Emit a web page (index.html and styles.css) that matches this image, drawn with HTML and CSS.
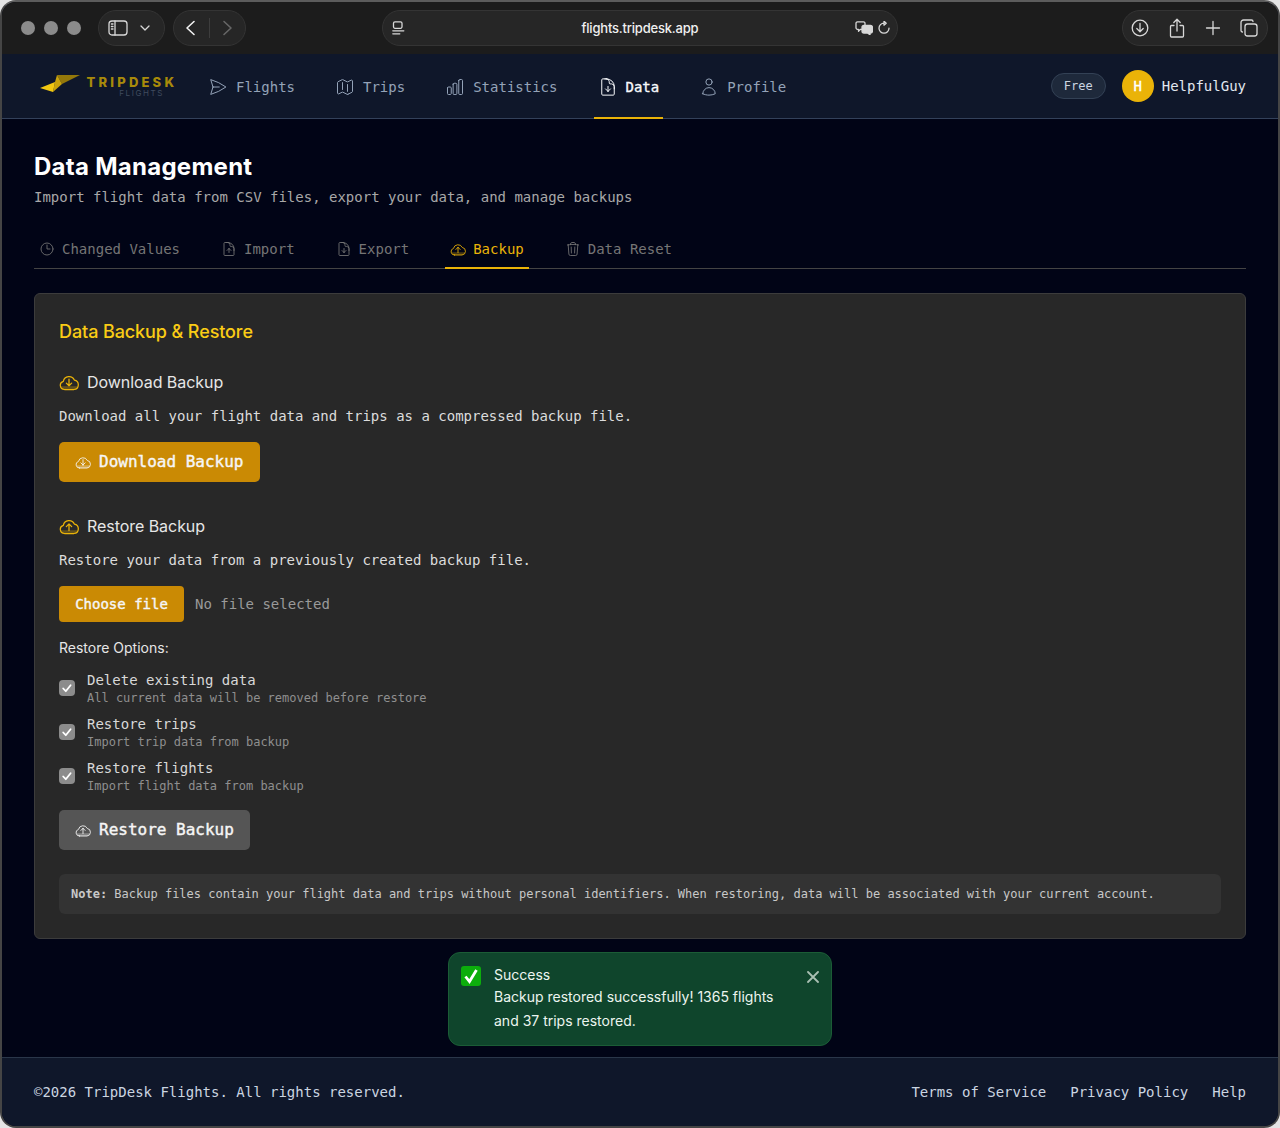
FILE: index.html
```html
<!DOCTYPE html>
<html lang="en">
<head>
<meta charset="utf-8">
<title>TripDesk Flights</title>
<link rel="stylesheet" href="styles.css">
</head>
<body>
<svg class="defs" width="0" height="0" aria-hidden="true">
  <symbol id="i-plane" viewBox="0 0 24 24"><path d="M6 12 3.269 3.125A59.769 59.769 0 0 1 21.485 12 59.768 59.768 0 0 1 3.27 20.875L5.999 12Zm0 0h7.5"/></symbol>
  <symbol id="i-map" viewBox="0 0 24 24"><path d="M9 6.75V15m6-6v8.25m.503 3.498 4.875-2.437c.381-.19.622-.58.622-1.006V4.82c0-.836-.88-1.38-1.628-1.006l-3.869 1.934c-.317.159-.69.159-1.006 0L9.503 3.252a1.125 1.125 0 0 0-1.006 0L3.622 5.689C3.24 5.88 3 6.27 3 6.695V19.18c0 .836.88 1.38 1.628 1.006l3.869-1.934c.317-.159.69-.159 1.006 0l4.994 2.497c.317.158.69.158 1.006 0Z"/></symbol>
  <symbol id="i-chart" viewBox="0 0 24 24"><path d="M3 13.125C3 12.504 3.504 12 4.125 12h2.25c.621 0 1.125.504 1.125 1.125v6.75C7.5 20.496 6.996 21 6.375 21h-2.25A1.125 1.125 0 0 1 3 19.875v-6.75ZM9.750 8.625c0-.621.504-1.125 1.125-1.125h2.25c.621 0 1.125.504 1.125 1.125v11.25c0 .621-.504 1.125-1.125 1.125h-2.25a1.125 1.125 0 0 1-1.125-1.125V8.625ZM16.500 4.125c0-.621.504-1.125 1.125-1.125h2.25C20.496 3 21 3.504 21 4.125v15.75c0 .621-.504 1.125-1.125 1.125h-2.25a1.125 1.125 0 0 1-1.125-1.125V4.125Z"/></symbol>
  <symbol id="i-docdown" viewBox="0 0 24 24"><path d="M19.500 14.250v-2.625a3.375 3.375 0 0 0-3.375-3.375h-1.500A1.125 1.125 0 0 1 13.500 7.125v-1.500a3.375 3.375 0 0 0-3.375-3.375H8.250m.750 12 3 3m0 0 3-3m-3-3v6m-1.500-15H5.625c-.621 0-1.125.504-1.125 1.125v17.250c0 .621.504 1.125 1.125 1.125h12.750c.621 0 1.125-.504 1.125-1.125V11.250a9 9 0 0 0-9-9Z"/></symbol>
  <symbol id="i-docup" viewBox="0 0 24 24"><path d="M19.500 14.250v-2.625a3.375 3.375 0 0 0-3.375-3.375h-1.500A1.125 1.125 0 0 1 13.500 7.125v-1.500a3.375 3.375 0 0 0-3.375-3.375H8.250m6.750 12-3-3m0 0-3 3m3-3v6m-1.500-15H5.625c-.621 0-1.125.504-1.125 1.125v17.250c0 .621.504 1.125 1.125 1.125h12.750c.621 0 1.125-.504 1.125-1.125V11.250a9 9 0 0 0-9-9Z"/></symbol>
  <symbol id="i-user" viewBox="0 0 24 24"><path d="M15.750 6a3.750 3.750 0 1 1-7.500 0 3.750 3.750 0 0 1 7.500 0ZM4.501 20.118a7.500 7.500 0 0 1 14.998 0A17.933 17.933 0 0 1 12 21.750c-2.676 0-5.216-.584-7.499-1.632Z"/></symbol>
  <symbol id="i-clock" viewBox="0 0 24 24"><path d="M12 6v6h4.500m4.500 0a9 9 0 1 1-18 0 9 9 0 0 1 18 0Z"/></symbol>
  <symbol id="i-trash" viewBox="0 0 24 24"><path d="m14.740 9-.346 9m-4.788 0L9.260 9m9.968-3.210c.342.052.682.107 1.022.166m-1.022-.165L18.160 19.673a2.250 2.250 0 0 1-2.244 2.077H8.084a2.250 2.250 0 0 1-2.244-2.077L4.772 5.790m14.456 0a48.108 48.108 0 0 0-3.478-.397m-12 .562c.340-.059.680-.114 1.022-.165m0 0a48.110 48.110 0 0 1 3.478-.397m7.500 0v-.916c0-1.180-.910-2.164-2.090-2.201a51.964 51.964 0 0 0-3.320 0c-1.180.037-2.090 1.022-2.090 2.201v.916m7.500 0a48.667 48.667 0 0 0-7.500 0"/></symbol>
  <symbol id="i-cloud-up" viewBox="0 0 24 20"><path class="duo" d="M2.500 15a4.300 4.300 0 0 0 4 4H18a4.200 4.200 0 0 0 3.800-4Z"/><path d="M12 15.500V7.500m0 0 3.200 3.200M12 7.500l-3.200 3.200M6.500 19A5 5 0 0 1 5.200 9.200a7 7 0 0 1 13.200-1.500A5.700 5.700 0 0 1 18 19H6.500Z"/></symbol>
  <symbol id="i-cloud-down" viewBox="0 0 24 20"><path class="duo" d="M2.500 15a4.300 4.300 0 0 0 4 4H18a4.200 4.200 0 0 0 3.800-4Z"/><path d="M12 6.500v8m0 0-3.200-3.200m3.200 3.200 3.200-3.200M6.500 19A5 5 0 0 1 5.200 9.200a7 7 0 0 1 13.200-1.500A5.700 5.700 0 0 1 18 19H6.500Z"/></symbol>
</svg>

<div class="window">
  <div class="chrome">
    <div class="lights"><span class="light"></span><span class="light"></span><span class="light"></span></div>
    <div class="pill pill-side">
      <svg class="cicon c20" viewBox="0 0 20 20"><rect x="1" y="3" width="18" height="14" rx="3"/><path d="M7 3v14M3.400 6h1.600M3.400 8.500h1.600M3.400 11h1.600"/></svg>
      <svg class="cicon c12" viewBox="0 0 12 12"><path d="m2 4 4 4 4-4"/></svg>
    </div>
    <div class="pill pill-nav">
      <svg class="cicon c16 strong" viewBox="0 0 16 16"><path d="M11 1.500 4 8l7 6.500"/></svg>
      <span class="pill-sep"></span>
      <svg class="cicon c16 dim" viewBox="0 0 16 16"><path d="m5 1.500 7 6.500-7 6.500"/></svg>
    </div>
    <div class="url">
      <svg class="cicon c14" viewBox="0 0 14 14"><rect x="1.500" y=".8" width="8.500" height="6.500" rx="1.500"/><path d="M.8 9.800h11M.8 12.800h7"/></svg>
      <span class="url-text">flights.tripdesk.app</span>
      <span class="url-tools">
        <svg class="cicon c-trans" viewBox="0 0 18 14"><path d="M2.500.8h6A1.500 1.500 0 0 1 10 2.300v4.500a1.500 1.500 0 0 1-1.500 1.500H5.500l-2 2V8.300h-1A1.500 1.500 0 0 1 1 6.800V2.300A1.500 1.500 0 0 1 2.500.8Z"/><path class="solid" d="M9 4.500h6.500a2 2 0 0 1 2 2v3.500a2 2 0 0 1-2 2h-.5v1.800L12.500 12H9a2 2 0 0 1-2-2V6.500a2 2 0 0 1 2-2Z"/></svg>
        <svg class="cicon c14" viewBox="0 0 14 14"><path d="M7 2.200a5 5 0 1 0 5 5M7 .2v4l2.200-2Z"/></svg>
      </span>
    </div>
    <div class="pill pill-tools">
      <svg class="cicon c18" viewBox="0 0 18 18"><circle cx="9" cy="9" r="7.800"/><path d="M9 4.500v8M5.800 9.500 9 12.700l3.200-3.200"/></svg>
      <svg class="cicon c-share" viewBox="0 0 18 20"><path d="M6 7.500H3.500a1 1 0 0 0-1 1V18a1 1 0 0 0 1 1h11a1 1 0 0 0 1-1V8.500a1 1 0 0 0-1-1H12M9 13V1.500M5.800 4.500 9 1.300l3.200 3.200"/></svg>
      <svg class="cicon c16" viewBox="0 0 16 16"><path d="M8 1.500v13M1.500 8h13"/></svg>
      <svg class="cicon c18" viewBox="0 0 18 18"><rect x="5" y="5" width="12" height="12" rx="2.500"/><path d="M2.500 13A1.500 1.500 0 0 1 1 11.500V3.500A2.500 2.500 0 0 1 3.500 1h8A1.500 1.500 0 0 1 13 2.500"/></svg>
    </div>
  </div>

  <header class="site-header">
    <a class="logo">
      <svg class="logo-mark" viewBox="0 0 40 18">
        <polygon class="wing-a" points="17,1 40,1 22,10"/>
        <polygon class="wing-b" points="17,1 22,10 13,18 15,8"/>
        <polygon class="wing-c" points="0,14 15,8 13,18"/>
      </svg>
      <span class="logo-text"><span class="logo-name">TRIPDESK</span><span class="logo-sub">FLIGHTS</span></span>
    </a>
    <nav class="main-nav">
      <a class="nav-item"><svg class="icon nav-icon"><use href="#i-plane"/></svg>Flights</a>
      <a class="nav-item"><svg class="icon nav-icon"><use href="#i-map"/></svg>Trips</a>
      <a class="nav-item"><svg class="icon nav-icon"><use href="#i-chart"/></svg>Statistics</a>
      <a class="nav-item active"><svg class="icon nav-icon"><use href="#i-docdown"/></svg>Data</a>
      <a class="nav-item"><svg class="icon nav-icon"><use href="#i-user"/></svg>Profile</a>
    </nav>
    <div class="user-area">
      <span class="plan">Free</span>
      <span class="avatar">H</span>
      <span class="user-name">HelpfulGuy</span>
    </div>
  </header>

  <main class="content">
    <h1 class="page-title">Data Management</h1>
    <p class="page-sub">Import flight data from CSV files, export your data, and manage backups</p>

    <div class="tabs">
      <a class="tab"><svg class="icon tab-icon"><use href="#i-clock"/></svg>Changed Values</a>
      <a class="tab"><svg class="icon tab-icon"><use href="#i-docup"/></svg>Import</a>
      <a class="tab"><svg class="icon tab-icon"><use href="#i-docdown"/></svg>Export</a>
      <a class="tab active"><svg class="icon tab-icon"><use href="#i-cloud-up"/></svg>Backup</a>
      <a class="tab"><svg class="icon tab-icon"><use href="#i-trash"/></svg>Data Reset</a>
    </div>

    <section class="card">
      <h2 class="card-title">Data Backup &amp; Restore</h2>

      <h3 class="sec-title"><svg class="icon sec-icon"><use href="#i-cloud-down"/></svg>Download Backup</h3>
      <p class="sec-desc">Download all your flight data and trips as a compressed backup file.</p>
      <button class="btn btn-primary"><svg class="icon btn-icon"><use href="#i-cloud-down"/></svg>Download Backup</button>

      <h3 class="sec-title sec-restore"><svg class="icon sec-icon"><use href="#i-cloud-up"/></svg>Restore Backup</h3>
      <p class="sec-desc">Restore your data from a previously created backup file.</p>
      <div class="file-row">
        <span class="file-btn">Choose file</span>
        <span class="file-name">No file selected</span>
      </div>

      <p class="options-label">Restore Options:</p>
      <div class="option">
        <span class="check"><svg viewBox="0 0 16 16"><path d="m4.200 8.500 2.600 2.700 4.800-6"/></svg></span>
        <span class="opt-text"><span class="opt-name">Delete existing data</span><span class="opt-hint">All current data will be removed before restore</span></span>
      </div>
      <div class="option">
        <span class="check"><svg viewBox="0 0 16 16"><path d="m4.200 8.500 2.600 2.700 4.800-6"/></svg></span>
        <span class="opt-text"><span class="opt-name">Restore trips</span><span class="opt-hint">Import trip data from backup</span></span>
      </div>
      <div class="option">
        <span class="check"><svg viewBox="0 0 16 16"><path d="m4.200 8.500 2.600 2.700 4.800-6"/></svg></span>
        <span class="opt-text"><span class="opt-name">Restore flights</span><span class="opt-hint">Import flight data from backup</span></span>
      </div>
      <button class="btn btn-muted"><svg class="icon btn-icon"><use href="#i-cloud-up"/></svg>Restore Backup</button>

      <div class="note"><strong>Note:</strong> Backup files contain your flight data and trips without personal identifiers. When restoring, data will be associated with your current account.</div>
    </section>

    <div class="toast">
      <svg class="toast-check" viewBox="0 0 20 20"><rect width="20" height="20" rx="3"/><path d="m4.500 10.500 4 5 7-11.500"/></svg>
      <div class="toast-body">
        <div class="toast-title">Success</div>
        <div class="toast-msg">Backup restored successfully! 1365 flights and 37 trips restored.</div>
      </div>
      <svg class="toast-close" viewBox="0 0 12 12"><path d="m1 1 10 10M11 1 1 11"/></svg>
    </div>
  </main>

  <footer class="site-footer">
    <span>©2026 TripDesk Flights. All rights reserved.</span>
    <nav class="foot-links"><a>Terms of Service</a><a>Privacy Policy</a><a>Help</a></nav>
  </footer>
</div>
</body>
</html>
```

FILE: styles.css
```css
* { box-sizing: border-box; }
html, body { margin: 0; padding: 0; }
body {
  width: 1280px;
  height: 1128px;
  background: #e4e4e4;
  font-family: "DejaVu Sans Mono", monospace;
  overflow: hidden;
}
a { color: inherit; text-decoration: none; }
h1, h2, h3, p { margin: 0; font-weight: normal; }
.defs { position: absolute; }

.window {
  width: 1280px;
  height: 1128px;
  border: 2px solid #454545;
  border-top-color: #5c5c5c;
  border-radius: 16px;
  overflow: hidden;
  background: #010416;
  display: flex;
  flex-direction: column;
}

.icon {
  fill: none;
  stroke: currentColor;
  stroke-width: 1.500;
  stroke-linecap: round;
  stroke-linejoin: round;
  flex: none;
}
.duo { fill: currentColor; fill-opacity: .3; stroke: none; }

/* browser chrome */
.chrome {
  height: 52px;
  flex: none;
  background: #1c1c1c;
  display: flex;
  align-items: center;
  padding: 0 10px 0 19px;
  color: #e4e4e4;
}
.lights { display: flex; gap: 9px; margin-right: 17px; }
.light { width: 14px; height: 14px; border-radius: 50%; background: #8b8b8b; }
.pill, .url {
  height: 36px;
  border: 1px solid #343434;
  border-radius: 18px;
  background: #262626;
  display: flex;
  align-items: center;
  flex: none;
}
.pill-side { width: 67px; padding: 0 13px 0 9px; justify-content: space-between; margin-right: 8px; }
.pill-nav { width: 73px; padding: 0 10px 0 9px; justify-content: space-between; margin-right: 136px; }
.pill-sep { width: 1px; height: 20px; background: #3d3d3d; }
.url { width: 516px; padding: 0 6px 0 9px; margin-right: 224px; }
.url-text {
  flex: 1;
  text-align: center;
  font-family: "Inter", sans-serif;
  font-size: 13px;
  font-weight: 500;
  letter-spacing: -.2px;
  color: #f0f0f0;
  padding-left: 19px;
}
.url-tools { display: flex; align-items: center; gap: 4px; }
.pill-tools { width: 146px; padding: 0 9px 0 8px; justify-content: space-between; }
.cicon {
  fill: none;
  stroke: #d8d8d8;
  stroke-width: 1.300;
  stroke-linecap: round;
  stroke-linejoin: round;
  flex: none;
}
.cicon .solid { fill: #d8d8d8; }
.c12 { width: 12px; height: 12px; }
.c14 { width: 14px; height: 14px; }
.c16 { width: 16px; height: 16px; }
.c18 { width: 18px; height: 18px; }
.c20 { width: 20px; height: 20px; }
.c-trans { width: 18px; height: 14px; }
.c-share { width: 18px; height: 20px; }
.strong { stroke: #f2f2f2; stroke-width: 1.600; }
.dim { stroke: #666; stroke-width: 1.600; }

/* site header */
.site-header {
  height: 65px;
  flex: none;
  background: #0f172a;
  border-bottom: 1px solid #33415a;
  display: flex;
  align-items: center;
  padding: 0 32px 0 38px;
  font-size: 14px;
}
.logo { display: flex; align-items: flex-start; width: 135px; margin-right: 29px; }
.logo-mark { width: 40px; height: 18px; flex: none; margin-right: 7px; }
.wing-a { fill: #94780a; }
.wing-b { fill: #c9a30d; }
.wing-c { fill: #f2c811; }
.logo-text { display: flex; flex-direction: column; align-items: flex-end; width: 88px; margin-top: 1px; }
.logo-name {
  font-family: "Inter", sans-serif;
  font-weight: 800;
  font-size: 13px;
  line-height: 15px;
  letter-spacing: 3.200px;
  margin-right: -2.200px;
  color: #a88a0a;
  white-space: nowrap;
}
.logo-sub {
  font-family: "Inter", sans-serif;
  font-size: 8px;
  line-height: 9px;
  letter-spacing: 1.600px;
  color: #3f4b5e;
  margin: -1px 11px 0 0;
}
.main-nav { display: flex; gap: 32px; align-self: stretch; }
.nav-item {
  display: flex;
  align-items: center;
  padding: 2px 4px 0 6px;
  color: #94a3b8;
  border-bottom: 2px solid transparent;
  margin-bottom: -1px;
  white-space: nowrap;
}
.nav-item:nth-child(3) { margin-right: 1px; }
.nav-item.active { color: #f8fafc; -webkit-text-stroke: .35px #f8fafc; border-bottom-color: #eab308; }
.nav-icon { width: 20px; height: 20px; margin: 0 8px 0 -2px; stroke-width: 1.200; }
.nav-item.active .nav-icon { margin-right: 7px; }
.user-area { display: flex; align-items: center; margin-left: auto; }
.plan {
  width: 55px;
  height: 26px;
  border-radius: 13px;
  background: #1e293b;
  border: 1px solid #334155;
  color: #cbd5e1;
  font-size: 12px;
  font-weight: 500;
  display: flex;
  align-items: center;
  justify-content: center;
  margin-right: 16px;
}
.avatar {
  width: 32px;
  height: 32px;
  border-radius: 50%;
  background: #eab308;
  color: #fff;
  -webkit-text-stroke: .35px #fff;
  display: flex;
  align-items: center;
  justify-content: center;
  margin-right: 8px;
}
.user-name { color: #e2e8f0; }

/* content */
.content {
  flex: 1;
  min-height: 0;
  padding: 33px 32px 0;
  display: flex;
  flex-direction: column;
}
.page-title {
  font-family: "Inter", sans-serif;
  font-size: 24px;
  font-weight: 700;
  line-height: 30px;
  letter-spacing: .27px;
  color: #fff;
}
.page-sub {
  font-size: 14px;
  line-height: 20px;
  color: #a8a8a8;
  margin-top: 5px;
}
.tabs {
  display: flex;
  gap: 31px;
  margin-top: 24px;
  height: 38px;
  border-bottom: 1px solid #444;
  font-size: 14px;
  color: #757575;
}
.tab {
  display: flex;
  align-items: center;
  padding: 0 5px;
  height: 38px;
  border-bottom: 2px solid transparent;
  white-space: nowrap;
}
.tab.active { color: #eab308; border-bottom-color: #eab308; }
.tab-icon { width: 16px; height: 16px; margin-right: 7px; stroke-width: 1.300; }

.card {
  margin-top: 24px;
  height: 646px;
  background: #282828;
  border: 1px solid #3c3c3c;
  border-radius: 6px;
  padding: 25px 24px 0;
  flex: none;
}
.card-title {
  font-family: "Inter", sans-serif;
  font-size: 18px;
  font-weight: 500;
  line-height: 26px;
  letter-spacing: -.1px;
  color: #facc15;
}
.sec-title {
  display: flex;
  align-items: center;
  font-family: "Inter", sans-serif;
  font-size: 16px;
  line-height: 24px;
  letter-spacing: -.05px;
  color: #e6e6e6;
  margin-top: 25px;
}
.sec-restore { margin-top: 32px; }
.sec-icon { width: 20px; height: 18px; color: #eab308; margin-right: 8px; stroke-width: 1.500; }
.sec-desc {
  font-size: 14px;
  line-height: 20px;
  color: #dcdcdc;
  margin-top: 12px;
}
.btn {
  display: flex;
  align-items: center;
  height: 40px;
  margin-top: 16px;
  padding: 0 16px 2px;
  border: 0;
  border-radius: 5px;
  font-family: "DejaVu Sans Mono", monospace;
  font-size: 16px;
  color: #f6f6f6;
  -webkit-text-stroke: .4px #f6f6f6;
}
.btn-primary { background: #ca8a04; }
.btn-muted { background: #555; margin-top: 15px; }
.btn-icon { width: 16px; height: 14px; margin: 2px 8px 0 0; stroke-width: 1.300; -webkit-text-stroke: 0; }
.file-row { display: flex; align-items: center; margin-top: 16px; font-size: 14px; }
.file-btn {
  height: 36px;
  width: 125px;
  background: #ca8a04;
  color: #f6f6f6;
  -webkit-text-stroke: .4px #f6f6f6;
  border-radius: 4px;
  display: flex;
  align-items: center;
  justify-content: center;
  margin-right: 11px;
}
.file-name { color: #9a9a9a; }
.options-label {
  font-family: "Inter", sans-serif;
  font-size: 14px;
  line-height: 20px;
  color: #e6e6e6;
  margin-top: 16px;
}
.option { display: flex; align-items: center; height: 36px; margin-top: 8px; }
.options-label + .option { margin-top: 13px; }
.check {
  width: 16px;
  height: 16px;
  border-radius: 4px;
  background: #8c8c8c;
  margin: -2px 12px 0 0;
  flex: none;
}
.check svg { display: block; width: 16px; height: 16px; fill: none; stroke: #fff; stroke-width: 1.800; stroke-linecap: round; stroke-linejoin: round; }
.opt-text { display: flex; flex-direction: column; }
.opt-name { font-size: 14px; line-height: 18px; color: #d8d8d8; }
.opt-hint { font-size: 12px; line-height: 18px; color: #8f8f8f; }
.note {
  margin-top: 24px;
  height: 40px;
  background: #333;
  border-radius: 6px;
  padding: 0 12px;
  font-size: 12px;
  line-height: 40px;
  color: #c8c8c8;
  white-space: nowrap;
}
.toast {
  width: 384px;
  height: 94px;
  margin: 13px auto 0;
  background: #0f452c;
  border: 1px solid #1b5c36;
  border-radius: 12px;
  display: flex;
  align-items: flex-start;
  padding: 12px 12px 0;
  font-family: "Inter", sans-serif;
  font-size: 14px;
  color: #ecf5ef;
  flex: none;
}
.toast-check { width: 20px; height: 20px; flex: none; margin: 1px 13px 0 0; }
.toast-check rect { fill: #0cae0c; }
.toast-check path { fill: none; stroke: #fff; stroke-width: 2.800; }
.toast-body { flex: 1; }
.toast-title { line-height: 20px; }
.toast-msg { line-height: 24px; width: 295px; }
.toast-close { width: 12px; height: 12px; flex: none; margin: 6px 0 0 0; fill: none; stroke: #a9bfb2; stroke-width: 1.800; stroke-linecap: round; }

/* footer */
.site-footer {
  height: 69px;
  flex: none;
  background: #0f172a;
  border-top: 1px solid #2a3649;
  display: flex;
  align-items: center;
  justify-content: space-between;
  padding: 0 32px;
  font-size: 14px;
  color: #cbd5e1;
}
.foot-links { display: flex; gap: 24px; }
```
